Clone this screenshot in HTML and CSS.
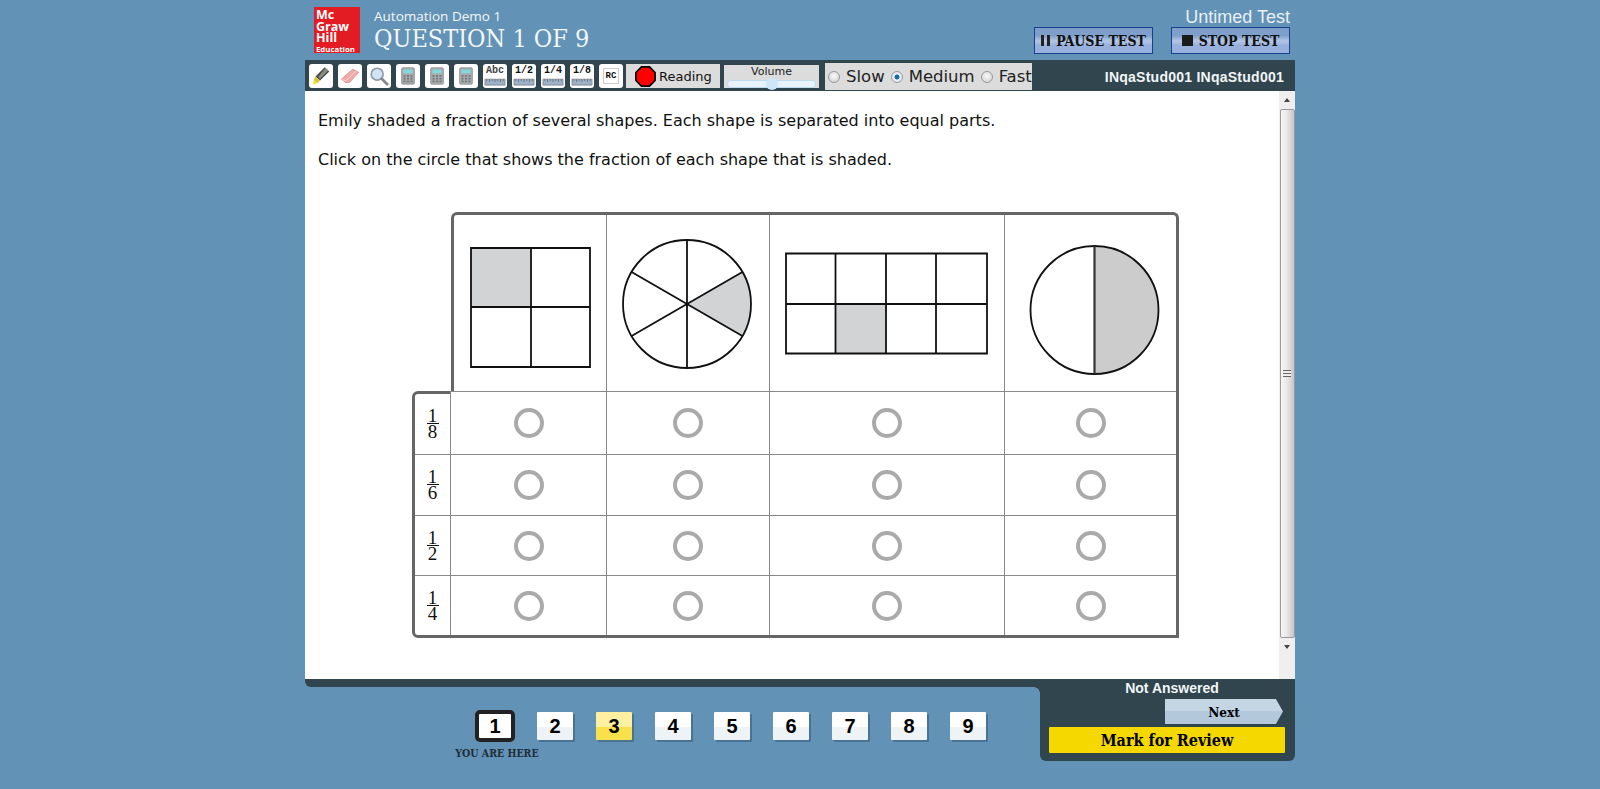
FILE: index.html
```html
<!DOCTYPE html>
<html lang="en">
<head>
<meta charset="utf-8">
<title>Question 1 of 9</title>
<link rel="stylesheet" href="styles.css">
</head>
<body>
<svg class="defs" width="0" height="0" aria-hidden="true">
  <defs>
    <symbol id="calc" viewBox="0 0 24 24">
      <rect x="5" y="3" width="14" height="18" rx="1.5" fill="#a9acac" stroke="#8a8d8e" stroke-width=".8"/>
      <rect x="7" y="5" width="10" height="4" fill="#7fdbe0"/>
      <g fill="#737779">
        <rect x="7" y="11" width="2.4" height="1.8"/><rect x="10.8" y="11" width="2.4" height="1.8"/><rect x="14.6" y="11" width="2.4" height="1.8"/>
        <rect x="7" y="14" width="2.4" height="1.8"/><rect x="10.8" y="14" width="2.4" height="1.8"/><rect x="14.6" y="14" width="2.4" height="1.8"/>
        <rect x="7" y="17" width="2.4" height="1.8"/><rect x="10.8" y="17" width="2.4" height="1.8"/><rect x="14.6" y="17" width="2.4" height="1.8"/>
      </g>
    </symbol>
    <symbol id="ruler" viewBox="0 0 24 10">
      <path d="M1 3h22v6.500H1z" fill="#9db0c8" stroke="#77797c" stroke-width=".7"/>
      <path d="M3 3v2M6 3v3M9 3v2M12 3v3M15 3v2M18 3v3M21 3v2" stroke="#4f5a66" stroke-width=".7" fill="none"/>
    </symbol>
  </defs>
</svg>

<div class="app">
  <header class="top">
    <div class="logo">
      <span class="logo-big">Mc</span>
      <span class="logo-big">Graw</span>
      <span class="logo-big">Hill</span>
      <span class="logo-small">Education</span>
    </div>
    <div class="titles">
      <div class="demo">Automation Demo 1</div>
      <h1 class="qnum">QUESTION 1 OF 9</h1>
    </div>
    <div class="test-side">
      <div class="untimed">Untimed Test</div>
      <div class="test-btns">
        <button class="test-btn"><span class="ico-pause"></span>PAUSE TEST</button>
        <button class="test-btn"><span class="ico-stop"></span>STOP TEST</button>
      </div>
    </div>
  </header>

  <div class="toolbar">
    <div class="tools">
      <span class="tool"><svg viewBox="0 0 24 24"><path d="M16 2.500l5 4.500-10 10-5-4.500z" fill="#4a4a46"/><path d="M17 3l3 3-9 9-2-2z" fill="#8a8a80"/><path d="M6 12.500l5 4.500-3 2.500-4-3.500z" fill="#d8c23a"/><path d="M4 16l4 3.500-4.500 2z" fill="#f2dc16"/></svg></span>
      <span class="tool"><svg viewBox="0 0 24 24"><path d="M15 4.500l6.500 3.500-10 11H7l-4.500-3.500z" fill="#f1a9a8" stroke="#c98a8a" stroke-width=".8"/><path d="M2.500 16l5 1 12-11" fill="none" stroke="#fbd4d2" stroke-width="1"/></svg></span>
      <span class="tool"><svg viewBox="0 0 24 24"><circle cx="10" cy="10" r="6.500" fill="#cfe4f4" stroke="#8f9aa2" stroke-width="1.800"/><path d="M15 15l6 6" stroke="#85898a" stroke-width="3" stroke-linecap="round"/></svg></span>
      <span class="tool"><svg><use href="#calc"/></svg></span>
      <span class="tool"><svg><use href="#calc"/></svg></span>
      <span class="tool"><svg><use href="#calc"/></svg></span>
      <span class="tool tool-ruler"><b class="rt rt-abc">Abc</b><svg class="ruler"><use href="#ruler"/></svg></span>
      <span class="tool tool-ruler"><b class="rt">1/2</b><svg class="ruler"><use href="#ruler"/></svg></span>
      <span class="tool tool-ruler"><b class="rt">1/4</b><svg class="ruler"><use href="#ruler"/></svg></span>
      <span class="tool tool-ruler"><b class="rt">1/8</b><svg class="ruler"><use href="#ruler"/></svg></span>
      <span class="tool tool-rc"><b class="rc">RC</b></span>
    </div>
    <div class="reading">
      <svg class="stop" viewBox="0 0 22 22"><path d="M6.800 1h8.400L21 6.800v8.400L15.200 21H6.800L1 15.200V6.800z" fill="#f00" stroke="#000" stroke-width="1.800"/></svg>
      <span>Reading</span>
    </div>
    <div class="volume">
      <span class="vol-label">Volume</span>
      <span class="vol-track"><span class="vol-thumb"></span></span>
    </div>
    <div class="speed">
      <span class="radio"></span><span class="speed-label">Slow</span>
      <span class="radio on"></span><span class="speed-label">Medium</span>
      <span class="radio"></span><span class="speed-label">Fast</span>
    </div>
    <div class="user">INqaStud001 INqaStud001</div>
  </div>

  <div class="content">
    <main class="main">
      <p class="q">Emily shaded a fraction of several shapes. Each shape is separated into equal parts.</p>
      <p class="q q2">Click on the circle that shows the fraction of each shape that is shaded.</p>

      <div class="table">
        <div class="head">
          <div class="hcell c1">
            <svg viewBox="0 0 152 176">
              <rect x="17" y="33" width="60" height="59" fill="#d1d3d4"/>
              <path d="M17 33h119v119H17zM77 33v119M17 92h119" class="ln"/>
            </svg>
          </div>
          <div class="hcell c2">
            <svg viewBox="0 0 162 176">
              <circle cx="80" cy="89" r="64" fill="#fff"/>
              <path d="M80 89L135.400 57A64 64 0 0 1 135.400 121z" fill="#d1d3d4"/>
              <circle cx="80" cy="89" r="64" class="ln"/>
              <path d="M80 25v128M24.600 57L135.400 121M24.600 121L135.400 57" class="ln"/>
            </svg>
          </div>
          <div class="hcell c3">
            <svg viewBox="0 0 234 176">
              <rect x="65.500" y="89" width="50.500" height="49.500" fill="#d1d3d4"/>
              <path d="M16 38.500h201v100H16zM65.500 38.500v100M116 38.500v100M166 38.500v100M16 89h201" class="ln"/>
            </svg>
          </div>
          <div class="hcell c4">
            <svg viewBox="0 0 171 176">
              <path d="M89.500 31A64 64 0 0 1 89.500 159z" fill="#ccc"/>
              <circle cx="89.500" cy="95" r="64" class="ln"/>
              <path d="M89.500 31v128" class="ln ln-dark"/>
            </svg>
          </div>
        </div>

        <div class="rows">
          <div class="row r1">
            <div class="fr"><span class="n">1</span><span class="d">8</span></div>
            <div class="cell"><span class="opt"></span></div><div class="cell"><span class="opt"></span></div><div class="cell"><span class="opt"></span></div><div class="cell"><span class="opt"></span></div>
          </div>
          <div class="row r2">
            <div class="fr"><span class="n">1</span><span class="d">6</span></div>
            <div class="cell"><span class="opt"></span></div><div class="cell"><span class="opt"></span></div><div class="cell"><span class="opt"></span></div><div class="cell"><span class="opt"></span></div>
          </div>
          <div class="row r3">
            <div class="fr"><span class="n">1</span><span class="d">2</span></div>
            <div class="cell"><span class="opt"></span></div><div class="cell"><span class="opt"></span></div><div class="cell"><span class="opt"></span></div><div class="cell"><span class="opt"></span></div>
          </div>
          <div class="row r3">
            <div class="fr"><span class="n">1</span><span class="d">4</span></div>
            <div class="cell"><span class="opt"></span></div><div class="cell"><span class="opt"></span></div><div class="cell"><span class="opt"></span></div><div class="cell"><span class="opt"></span></div>
          </div>
        </div>
      </div>
    </main>
    <div class="scrollbar">
      <span class="arrow up"></span>
      <div class="thumb"><span class="grip"></span></div>
      <span class="arrow down"></span>
    </div>
  </div>

  <footer class="foot">
    <div class="foot-left">
      <div class="foot-bar"></div>
      <nav class="nums">
        <div class="here-wrap">
          <span class="num current">1</span>
          <span class="here">YOU ARE HERE</span>
        </div>
        <span class="num">2</span>
        <span class="num marked">3</span>
        <span class="num">4</span>
        <span class="num">5</span>
        <span class="num">6</span>
        <span class="num">7</span>
        <span class="num">8</span>
        <span class="num">9</span>
      </nav>
    </div>
    <div class="foot-right">
      <div class="status">Not Answered</div>
      <div class="next-row"><button class="next">Next</button></div>
      <button class="mark">Mark for Review</button>
    </div>
  </footer>
</div>
</body>
</html>
```

FILE: styles.css
```css
* { box-sizing: border-box; }
html, body { margin: 0; padding: 0; }
body { background: #6292b6; min-height: 789px; overflow: hidden; font-family: "Liberation Sans", Arial, sans-serif; }
.defs { position: absolute; }
.app { width: 990px; margin: 0 auto; }

/* top */
.top { height: 60px; display: flex; padding: 7px 5px 0 9px; }
.logo { width: 46px; height: 46px; background: #e31b23; color: #fff; padding: 2px 0 0 2px; display: flex; flex-direction: column; font-family: "Open Sans", sans-serif; font-weight: 700; }
.logo-big { font-size: 12.500px; line-height: 11.500px; }
.logo-small { font-size: 7.800px; line-height: 10px; }
.titles { margin-left: 14px; color: #f2f7fa; }
.demo { font-family: "Open Sans", sans-serif; font-size: 13.500px; line-height: 18px; margin-top: 0; }
.qnum { margin: 0; font-family: "DejaVu Serif Condensed", "DejaVu Serif", serif; font-weight: 400; font-size: 25px; line-height: 28px; }
.test-side { margin-left: auto; display: flex; flex-direction: column; align-items: flex-end; }
.untimed { font-size: 18px; line-height: 20px; color: #e8f0f6; }
.test-btns { display: flex; gap: 18px; }
.test-btn { width: 119px; height: 27px; border: 1px solid #17408f; background: linear-gradient(#7f9fcb 0, #7f9fcb 30%, #b4c6e6 52%, #98b0dd 70%, #98b0dd 100%); padding: 0; display: flex; align-items: center; justify-content: center; gap: 6px; font-family: "DejaVu Serif Condensed", "DejaVu Serif", serif; font-weight: 700; font-size: 14px; color: #111; }
.ico-pause { width: 9px; height: 11px; border-left: 3.500px solid #222; border-right: 3.500px solid #222; }
.ico-stop { width: 11px; height: 11px; background: #1a1a1a; }

/* toolbar */
.toolbar { height: 31px; background: #30454e; display: flex; align-items: flex-start; padding: 4px 0 0 4px; }
.tools { display: flex; gap: 5px; }
.tool { width: 24px; height: 24px; background: #fff; border-radius: 3px; display: flex; flex-direction: column; align-items: center; justify-content: center; overflow: hidden; }
.tool svg { width: 22px; height: 22px; display: block; }
.tool .ruler { width: 22px; height: 10px; }
.rt { font-family: "Liberation Mono", monospace; font-size: 10px; line-height: 10px; font-weight: 700; color: #111; }
.rt-abc { color: #444; }
.rc { font-family: "Liberation Mono", monospace; font-size: 9px; font-weight: 700; color: #111; border: 1px solid #ccc; padding: 2px 2px; line-height: 10px; }
.reading { width: 94px; height: 24px; margin-left: 3px; background: #dcdcdc; display: flex; align-items: center; padding-left: 9px; gap: 3px; font-family: "DejaVu Sans", sans-serif; font-size: 13px; color: #111; }
.stop { width: 21px; height: 21px; }
.volume { width: 95px; height: 23px; margin-left: 4px; margin-top: 1px; background: #dcdcdc; display: flex; flex-direction: column; align-items: center; font-family: "DejaVu Sans", sans-serif; font-size: 11px; line-height: 14px; color: #222; }
.vol-track { width: 89px; height: 8px; margin-top: 1px; background: #e8f3fb; border: 1px solid #bcdcf2; border-radius: 4px; display: flex; justify-content: center; align-items: center; }
.vol-thumb { width: 12px; height: 12px; border-radius: 50%; background: #cfe6f8; }
.speed { width: 207px; height: 27px; margin-left: 6px; margin-top: -1px; background: #dcdcdc; display: flex; align-items: center; padding-left: 3px; font-family: "DejaVu Sans", sans-serif; font-size: 16.500px; color: #222; }
.radio { width: 12px; height: 12px; border-radius: 50%; border: 1px solid #9a9a9a; background: radial-gradient(circle at 50% 40%, #fafafa, #ccc); margin-right: 6px; flex: none; }
.radio.on { background: radial-gradient(circle, #0d5a8a 0, #1a7fb8 32%, #eef 40%, #ddd 100%); }
.speed-label { margin-right: 6px; }
.user { margin-left: auto; padding-right: 11px; line-height: 27px; font-size: 14px; font-weight: 700; letter-spacing: .25px; color: #f2f6f8; }

/* content */
.content { height: 588px; background: #fff; display: flex; }
.main { flex: 1; padding: 20px 0 0 13px; overflow: hidden; }
.q { margin: 0; font-family: "DejaVu Sans", Verdana, sans-serif; font-size: 16px; line-height: 20px; color: #111; }
.q2 { margin-top: 19px; }
.table { margin: 42px 0 0 94px; width: 767px; }
.head { margin-left: 39px; width: 728px; height: 179px; border: 3px solid #666; border-bottom: 0; border-radius: 6px 6px 0 0; display: grid; grid-template-columns: 152px 163px 235px 172px; }
.hcell { height: 176px; }
.hcell + .hcell { border-left: 1px solid #888; }
.hcell svg { display: block; width: 100%; height: 100%; }
.ln { fill: none; stroke: #111; stroke-width: 1.800; }
.ln-dark { stroke: #333; stroke-width: 2.200; }

.rows { position: relative; border: 3px solid #666; border-radius: 6px 0 0 6px; border-top-right-radius: 0; border-bottom-right-radius: 0; }
.row { display: grid; grid-template-columns: 35px 156px 163px 235px 172px; height: 60px; }
.row.r1 { height: 60px; }
.row.r2 { height: 61px; }
.fr { display: flex; flex-direction: column; align-items: center; justify-content: center; font-family: "Liberation Serif", serif; font-size: 19px; color: #111; }
.row + .row .fr { border-top: 1px solid #888; }
.n { line-height: 14px; display: block; width: 12px; text-align: center; border-bottom: 1.500px solid #111; }
.d { line-height: 15px; }
.cell { border-left: 1px solid #888; border-top: 1px solid #888; display: flex; align-items: center; justify-content: center; background: #fff; }
.r1 .cell { margin-top: -3px; height: 63px; }
.opt { width: 30px; height: 30px; border: 4px solid #aaa; border-radius: 50%; }

/* scrollbar */
.scrollbar { width: 16px; background: #efefef; display: flex; flex-direction: column; align-items: center; }
.arrow { height: 18px; width: 100%; display: flex; align-items: center; justify-content: center; flex: none; }
.arrow::before { content: ""; border-left: 3.500px solid transparent; border-right: 3.500px solid transparent; }
.arrow.up::before { border-bottom: 4px solid #444; }
.arrow.down::before { border-top: 4px solid #444; }
.thumb { width: 15px; height: 529px; border: 1px solid #9a9a9a; border-radius: 2px; background: linear-gradient(90deg, #f6f6f6, #e8e8e8 45%, #c6c6c6); display: flex; align-items: center; justify-content: center; }
.grip { width: 8px; height: 7px; background: repeating-linear-gradient(#666 0, #666 1px, #eee 1px, #eee 2px, #eee 3px); }

/* footer */
.foot { display: grid; grid-template-columns: 735px 255px; }
.foot-left { position: relative; }
.foot-bar { height: 8px; background: #30454e; border-radius: 0 0 0 6px; }
.foot-bar::after { content: ""; position: absolute; right: 0; top: 8px; width: 6px; height: 6px; background: radial-gradient(circle at 0 100%, transparent 5.500px, #30454e 6px); }
.nums { display: flex; padding: 25px 0 0 173px; gap: 23px; align-items: flex-start; }
.here-wrap { width: 36px; position: relative; }
.num { width: 36px; height: 28px; border-radius: 1px; background: linear-gradient(#fff 0, #fff 54%, #eef3f6 54%); box-shadow: 2px 2px 0 #4a7293; display: flex; align-items: center; justify-content: center; font-weight: 700; font-size: 20px; color: #000; }
.num.marked { background: linear-gradient(#fdf0a0 0, #fdf0a0 54%, #f9e14b 54%); }
.num.current { position: absolute; left: -3px; top: -2px; width: 40px; height: 32px; border: 4px solid #222; border-radius: 5px; background: #fff; box-shadow: none; }
.here { position: absolute; left: -24px; top: 35px; width: 86px; text-align: center; font-family: "DejaVu Serif Condensed", "DejaVu Serif", serif; font-weight: 700; font-size: 10.500px; line-height: 13px; color: #1f2d38; }
.foot-right { height: 82px; background: #30454e; border-radius: 0 0 6px 6px; padding: 0 10px 0 9px; }
.status { padding-left: 10px; text-align: center; font-weight: 700; font-size: 14px; line-height: 18px; color: #f2f6f8; }
.next-row { display: flex; justify-content: flex-end; margin-top: 2px; padding-right: 2px; }
.next { width: 118px; height: 25px; padding: 0 0 0 0; border: 0; background: linear-gradient(#c4d5e3 0, #c4d5e3 48%, #b3c8da 48%); clip-path: polygon(0 0, 94% 0, 100% 50%, 94% 100%, 0 100%); font-family: "DejaVu Serif Condensed", "DejaVu Serif", serif; font-weight: 700; font-size: 13.500px; color: #000; }
.mark { display: block; width: 236px; height: 26px; margin-top: 3px; border: 0; padding: 0; background: #f5d800; border-radius: 1px; font-family: "DejaVu Serif Condensed", "DejaVu Serif", serif; font-weight: 700; font-size: 16px; color: #000; }
```
